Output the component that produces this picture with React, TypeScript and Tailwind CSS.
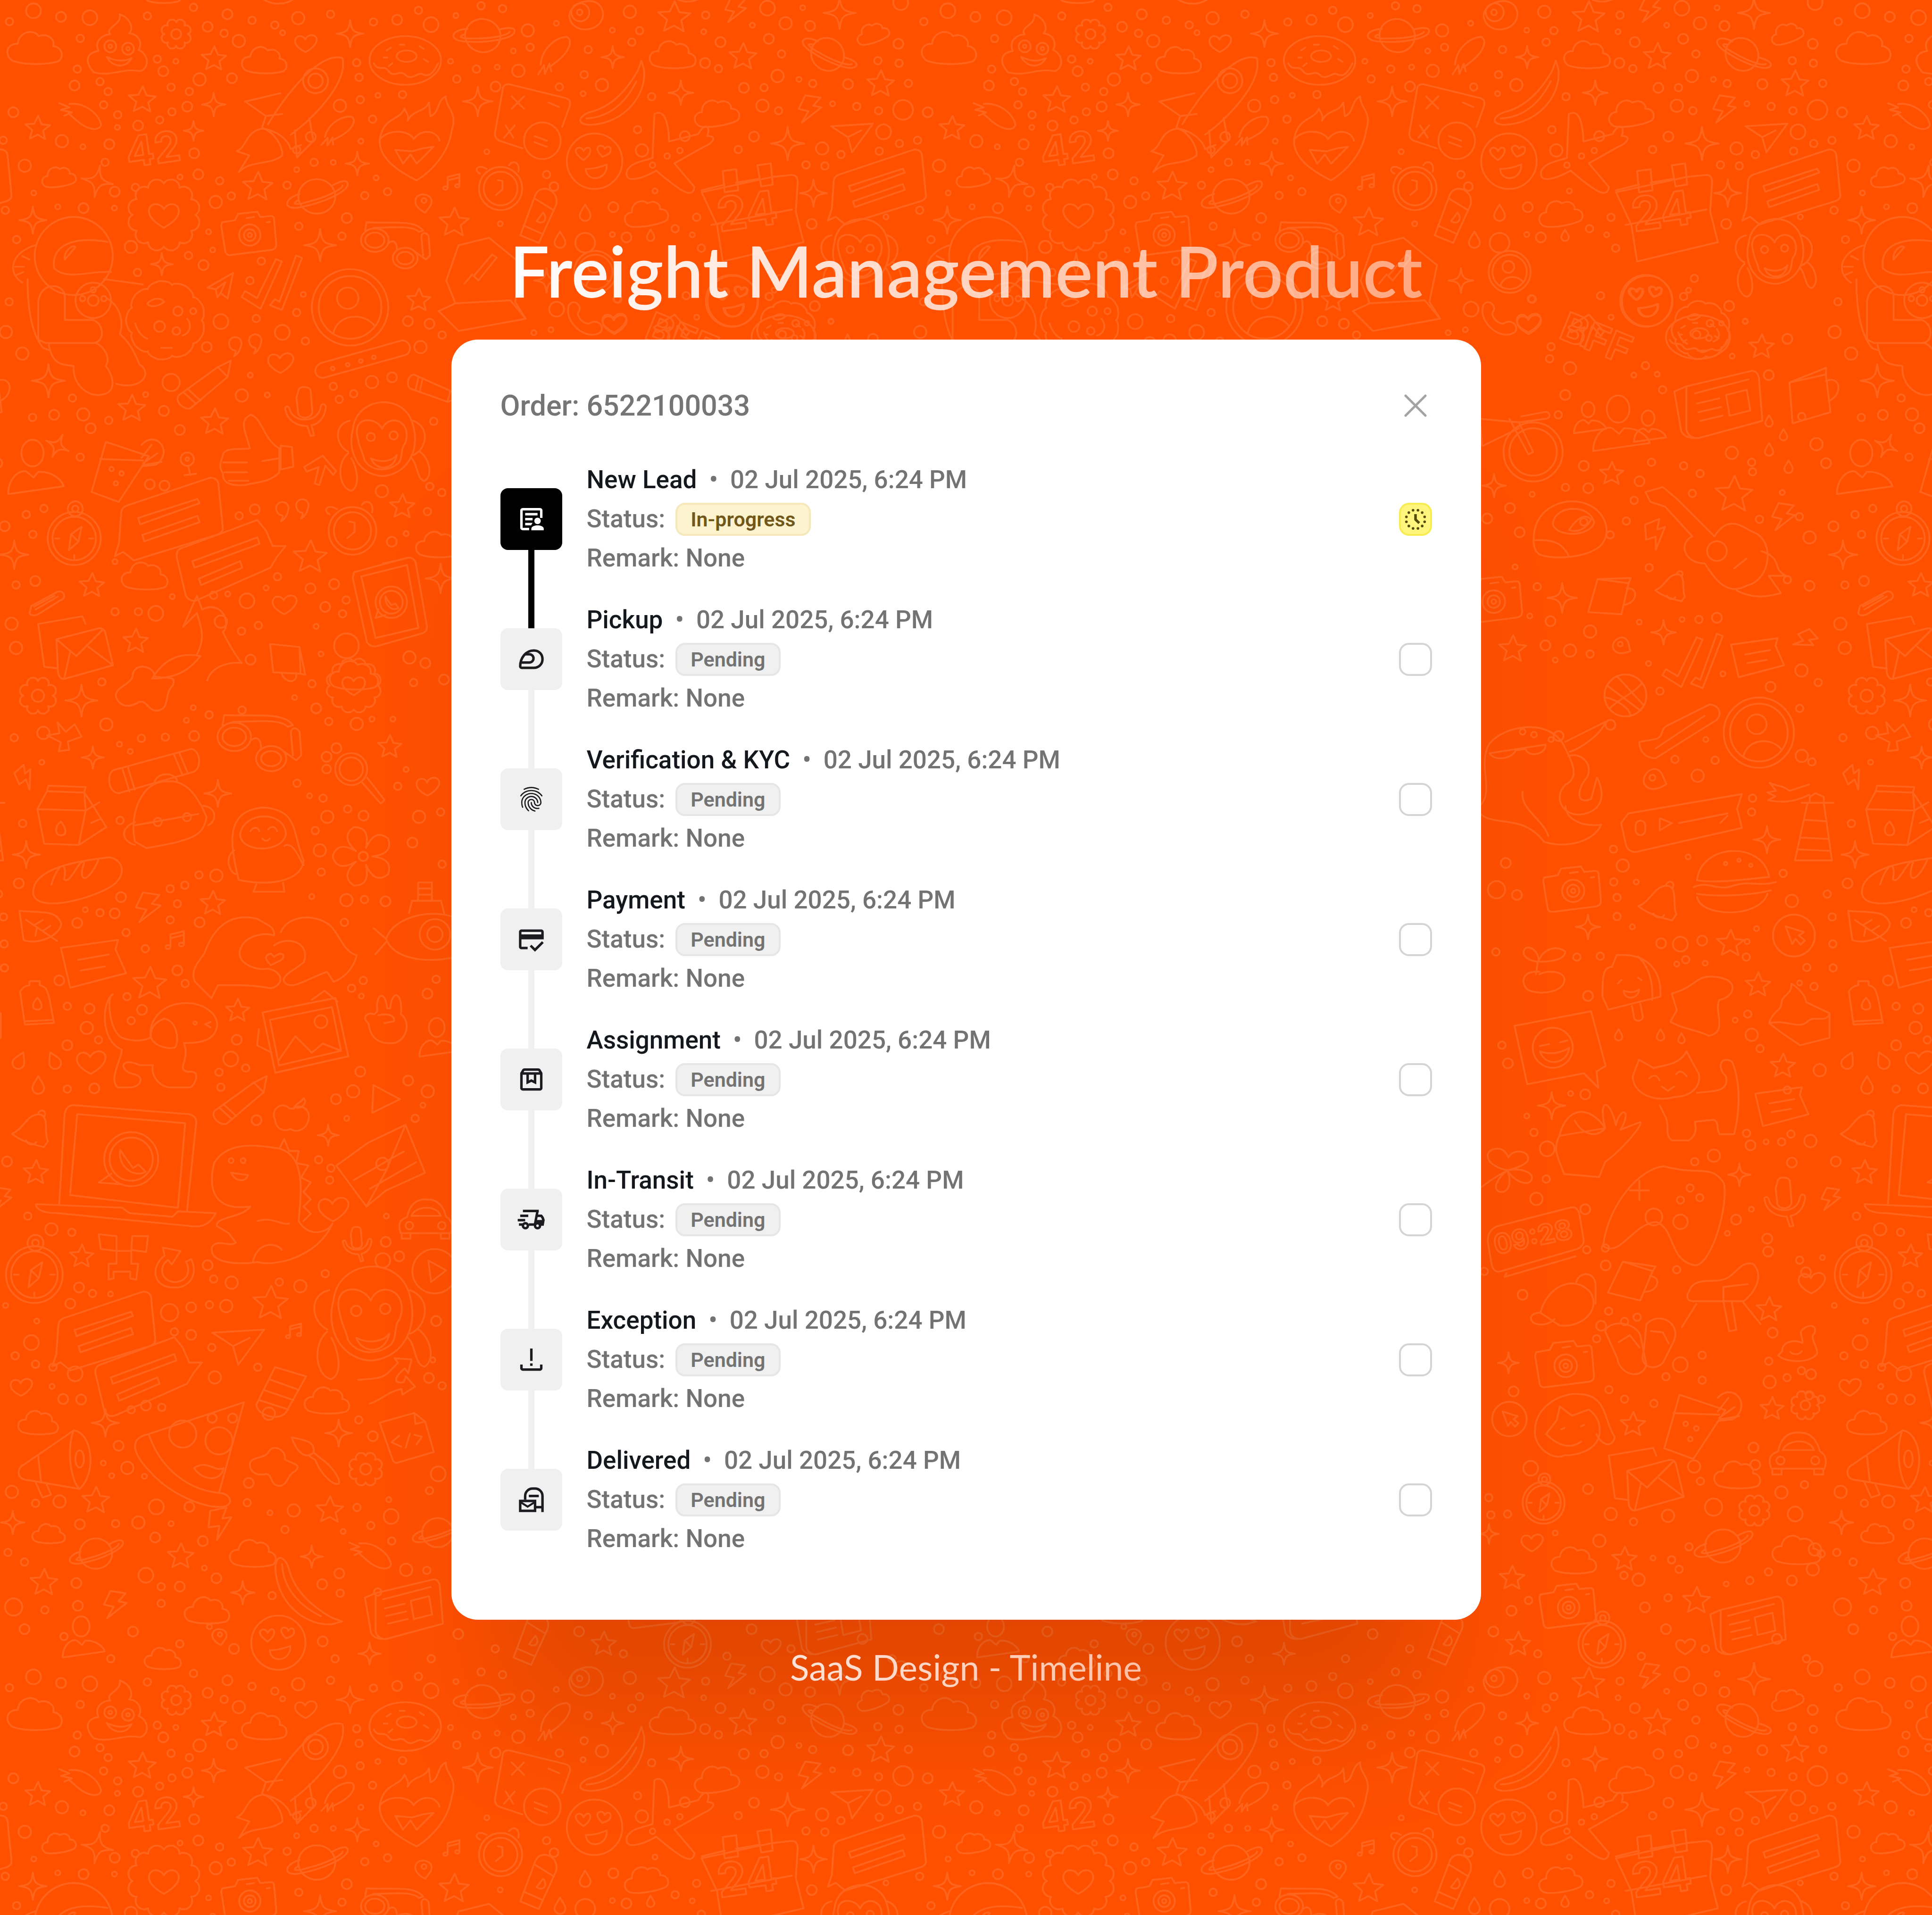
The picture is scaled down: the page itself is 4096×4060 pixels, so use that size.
import type { ReactNode } from "react";
import { MdCreditScore, MdFingerprint } from "react-icons/md";

/* ------------------------------------------------------------------ */
/* Doodle wallpaper                                                    */
/* ------------------------------------------------------------------ */

const scallop = (n: number, inner: number, outer: number) => {
  const pts: string[] = [];
  for (let i = 0; i < n; i++) {
    const a0 = (i / n) * Math.PI * 2;
    const a1 = ((i + 0.5) / n) * Math.PI * 2;
    const a2 = ((i + 1) / n) * Math.PI * 2;
    const p = (a: number, r: number) => `${(Math.cos(a) * r).toFixed(1)} ${(Math.sin(a) * r).toFixed(1)}`;
    if (i === 0) pts.push(`M${p(a0, inner)}`);
    pts.push(`Q${p(a0 + 0.08, outer)} ${p(a1, outer)}Q${p(a2 - 0.08, outer)} ${p(a2, inner)}`);
  }
  return pts.join("") + "Z";
};

const ring = (x: number, y: number, rx: number, ry = rx) =>
  `M${x - rx} ${y}a${rx} ${ry} 0 1 0 ${rx * 2} 0a${rx} ${ry} 0 1 0 ${-rx * 2} 0Z`;

/* Every motif is drawn about the origin in a box 100 units wide. */
const MOTIFS: Record<string, string> = {
  cloud: "M-40 22C-56 10-48-10-30-8C-28-30-2-36 8-22C24-28 38-16 34-4C52-2 54 18 42 24C20 30-20 30-40 22Z",
  star: "M2-50L16-16 50-12 22 10 30 44 0 26-32 42-22 8-50-16-14-18Z",
  sparkle: "M0-50C4-12 12-4 50 0C12 4 4 12 0 50C-4 12-12 4-50 0C-12-4-4-12 0-50Z",
  heart: "M-2 40C-30 26-54 6-48-16C-42-38-12-36-4-16C6-40 40-44 48-20C52 2 22 28-2 40Z",
  drop: "M0-50C20-15 34 0 34 18A34 34 0 0 1-34 18C-34 0-20-15 0-50Z",
  bolt: "M-18-50L38-42 12-12 42-6-30 50-6 8-42 0Z",
  gear: scallop(8, 38, 50) + ring(0, 0, 16),
  badge: scallop(12, 44, 51) + "M0 18C-14 10-24 0-20-10C-16-18-4-16 0-8C4-16 16-18 20-10C24 0 14 10 0 18Z",
  flower: scallop(5, 16, 54) + ring(0, 0, 8),
  planet: ring(0, 0, 30, 28) + "M-28-4C-56 4-56 26-20 16C10 10 46-6 50-18C52-28 40-26 26-18M-30 6C-44 14-30 14-12 8C14 2 42-12 42-18",
  donut: ring(0, 0, 50, 34) + ring(2, -6, 14, 8) + "M-44 4C-38 16-30 6-24 14C-16 26-8 12 0 20C10 30 18 14 26 20C36 24 42 12 46 4M-26-14l6-4M-8-22h7M20-20l6 4M26-2l6 4M-18 4l-5 4M-30-4h5",
  mitten: "M-50-32L-26-22-46-16-20-10-38-2M-26-30C10-34 44-8 50 20C44 36 18 32-8 10L-28-8",
  poop: "M-40 42C-58 22-50 8-32 6C-40-12-24-22-12-22C-22-34 8-38 4-56C22-50 28-32 20-24C38-22 42-6 36 4C54 12 54 36 38 40C10 34-10 50-40 42Z" + ring(-12, -2, 10) + ring(18, 2, 10) + ring(-12, -2, 3) + ring(18, 2, 3) + "M-18 16C0 24 10 24 24 18C14 36-8 34-18 16Z",
  rocket: "M-22 20C0-16 30-50 50-44C56-20 20 16 0 30M24-22m-12 0a12 12 0 1 0 24 0a12 12 0 1 0-24 0M24-22m-7 0a7 7 0 1 0 14 0a7 7 0 1 0-14 0M-10-10L-44-2-24 12-8 10M4 26L6 52 22 36 18 14M-24 12L-28 24C-12 26-2 36 0 44L10 40M-26 24C-44 26-42 42-52 46L-40 50-50 66C-38 54-20 60-8 50C-8 40-16 28-26 24Z",
  flame: "M4 44C-20 32-48 14-44-12C-38-40-18-34-12-50C-8-42-6-40-8-34C0-50 14-44 20-58L22-40C34-44 30-60 42-66C42-50 58-46 50-22C46 8 24 32 4 44ZM-44-10C-32-24-6-22 0-10C10-24 30-22 34-8M-24 4L-14 22-4 10 4 22 26 0 12 2-2 6Z",
  music: "M-30 30V-28L34-44V16M-30-10L34-26" + ring(-42, 32, 12, 9) + ring(22, 20, 12, 9),
  camera: "M-50-22L-26-26-20-38 16-42 22-32 42-34Q48-34 48-26L52 20Q52 28 44 30L-36 40Q-42 40-44 34L-52-16Z" + ring(2, 2, 20) + ring(2, 2, 11) + ring(2, 2, 4) + "M34-22l6-1M-4-30l14-2",
  glasses: ring(-28, 4, 20, 17) + ring(-28, 4, 14, 11) + ring(16, 30, 18, 15) + ring(16, 30, 12, 9) + "M-8 8C0 2 4 8 4 18M-42-10L-40-22C0-20 30-26 42-10L36-8C26-18 0-14-30-14M32 22L46 32 52 26 50-2C44-10 38-6 40 4L42 26",
  pin: "M10 50C-30 30-52 0-34-28C-16-52 34-46 42-14C46 10 30 20 10 50Z" + ring(4, -12, 12),
  astronaut: ring(-8, -52, 44) + "M-30-38C-34-66-6-74 30-68M-30-38C-14-24 10-36 34-34M-18-48C-20-56-10-66-6-62ZM-52-64C-78-56-84-34-66-22M-60-26C-60 4-56 36-42 52L-36 54M-66-52l8 4M-74-40h10M-74-30l9-4M-48 42V0C-46-24-18-22-18-6V20H14C28 26 26 46 14 46H-40ZM-36 48C-32 74-16 70-8 72C-10 94 10 108 24 104C40 102 38 84 28 72C36 60 20 44 14 46M26-26L70-20M30-4C46 6 48 24 44 36C56 46 62 60 66 70C82 80 68 100 40 92" + ring(14, -2, 20) + ring(14, -2, 6) + ring(2, -4, 3) + ring(26, -4, 3) + ring(14, -14, 3),
  plane: "M-50-18L50-24 0 44-10 8ZM-10 8L22-8",
  send: "M-50 10L44-44 24 50-2 30-14 46-20 16ZM-20 16L16-10-2 30",
  ticks: "M-50 24L-44 14-24 26 8-40 18-36-18 44ZM-2 38L6 28 14 32 42-46 52-42 18 46Z",
  profile: ring(0, 0, 50) + ring(0, 0, 41) + ring(-3, -12, 14) + "M-22 34C-16 8 18 6 32 24",
  cookie: scallop(9, 47, 52) + "M-24-22C-14-32-4-28-2-24C-10-18-20-16-24-22ZM-40 4C-36 16-30 22-24 24M28-2C36 8 30 18 22 20M-6 36H8" + ring(16, -12, 6) + ring(-8, 8, 7) + ring(14, 14, 5) + ring(36, -12, 4),
  quote: "M-48-6a18 18 0 1 1 34 4C-18 18-30 26-34 28C-30 20-28 14-30 12C-40 10-46 4-48-6ZM10-14a18 18 0 1 1 34 4C40 10 28 18 24 20C28 12 30 6 28 4C18 2 12-4 10-14Z",
  pencil: "M-46 18L26-34 50-46 44-16-22 40C-32 50-56 30-46 18ZM-38 12L-14 34M-30 6L-6 28M26-34L44-16",
  bar: "M-44 4L42-20C52-20 54-6 44-4L-42 20C-52 20-54 8-44 4Z" + ring(-32, 10, 2) + ring(-16, 6, 2) + ring(-2, 2, 2) + ring(12, -2, 2),
  thumb: "M-48-2C-44-12-22-8-10-10C-14-30-28-50-8-58C8-52 10-22 32-10V24C20 38 0 38-16 42C-34 44-50 40-48 26C-56 14-50 8-48-2ZM-48 10H-14M-46 24H-14M-40 36H-12M34-14L50-12 52 16 34 20ZM8 8L32 4",
  mic: "M-14-50C-8-58 12-56 14-46L18 4C16 22-12 22-16 8L-20-30ZM-46 0C-50-10-38-12-36-2C-30 30 32 34 38-8C40-18 52-16 50-4C46 20 32 34 16 36L22 60 14 62 6 38C-20 38-42 24-46 0Z",
  monkey: "M-34-14C-30-54 30-60 40-18C48 12 34 40 4 44C-26 44-42 14-34-14ZM-28-2C-36-30-6-30 2-14C10-34 40-24 30 4C24 10 28 20 22 28C8 40-12 38-20 24C-22 14-26 10-28-2ZM-12 22C0 28 14 26 20 18C16 38-6 38-12 22ZM-38-24C-58-20-56 6-40 14M40-24C62-16 56 12 40 18M-40 16C-56 30-50 60-36 62C-24 56-30 32-36 22M38 22C46 30 44 48 54 50C66 42 58 20 48 14" + ring(-12, -4, 5) + ring(16, -6, 5),
  user: ring(-6, -30, 20, 24) + "M-50 44C-50 10-22-4-14 6L-4 14 4 4C30 2 48 20 50 30Z",
  drink: "M-30-34L30-14-12 50-50 36ZM-38-10L22-8M20-30C40-52 66-20 40-2L22 0M22-4L42-18M20-12L34-30M24-2L48-6" + ring(-22, 4, 3) + ring(-8, 10, 3) + ring(-16, 24, 3),
  webcam: ring(0, -22, 30) + ring(0, -22, 8) + "M4 8L14 50M-12 50L40 44",
  arrow: "M-50-8L6-42 46 4 38 16 14-12-4 46-18 42-6-8-42 6Z",
  clock: ring(0, 4, 46) + ring(0, 4, 36) + "M-6-14L4-12 4 6-10 18M-44-28C-58-34-50-50-30-38M18-46C26-58 42-52 38-32",
  compass: ring(0, 6, 50) + ring(0, 6, 41) + ring(2, -50, 14) + ring(2, -50, 6) + "M14-16L8 12-10 28-6-2ZM-6-2L8 12M-36 6h8M28 6h8M0 44v-7",
  chat: "M-40-12L38-38Q46-38 46-30L50 10Q50 14 44 16L-34 40-44 32-52 36-48 24-46-4Q-46-10-40-12ZM-30 0L26-18 28-14-28 6ZM-26 16L26-2 28 4-24 22Z",
  chatflip: "M-44-8L26-34 34-24 40-10 52-10 44 0 38 10-30 40Q-36 42-40 36L-48 2Q-50-6-44-8ZM-34 4L26-18 28-12-32 10ZM-28 20L10 4 12 10-26 26Z",
  card: "M-48-22L38-34 34-20 50 16-34 38ZM-22-4L24-12M-18 12L18 6",
  clip: "M-46 30L-42 14 32-26C52-30 56-6 40-2L-24 38C-40 44-50 38-46 30ZM-30 24L32-12M-34 16L22-14",
  tablet: "M-48-42L26-62Q34-64 38-56L54 34Q54 42 46 44L-18 62Q-26 62-30 56L-50-34ZM-38-36L26-52 42 36-18 50ZM-8-54L10-58" + ring(4, 0, 22) + ring(4, 0, 16) + "M-4-8C-6 4 6 14 14 8L10 2 4 4-2-4ZM-14 10L-18 22-4 18",
  envelope: "M-48-28L10-38 14-28M-48-28L-40 28-24 30M-24-8L30-22Q38-24 40-16L50 26-14 44Q-20 44-22 36ZM-24-8L2 14 36-20M-14 44L-6 8M50 26L18 2",
  bird: "M-46 46C-30 20-10 16 10 20C2 30-12 46-46 46M6 18C18-4 8-20 6-30L-10-14 6-50 12-34C36-46 46-16 36-8C40 0 48 16 58 28C40 26 22 34 18 48",
  cup: "M-44 36L-26-28 34-20 20 40ZM-26-28L38-30 34-20M30-10C56-12 50 20 24 22",
  tube: "M10-50C24-48 34-36 30-20L-2 50-36 36-10-34C-6-46 0-50 10-50ZM-10-32L26-10M-30 18L6 34M6-6C16 6 6 18-6 10Z" + ring(26, -54, 8),
  milk: "M-50-12L-36-38 18-36 30-18 50 14 10 40-40 38ZM-50-12L20-10 10 40M18-36L20-10 40-22M-36-38L-34-46 20-44 18-36M-16 6C-6 18-8 26-16 26C-24 26-26 14-16 6ZM28 8L42 2",
  bread: "M-48 16C-50-12 0-20 36-24C54-20 54 0 34 10C8 24-44 36-48 16ZM-28 6C-20-20-10-20-14 0C-8 8 4-26 8-18C0 4 12 6 24-22",
  leaf: "M-50-42C0-36 40-46 50-10C44 20-8 40-40 28ZM-34-20L40 30M-14-8L6-20M-8-2L-12 18M6 6L24-6",
  bottle: "M-40-30C-30-44-24-44-16-46V-56H10V-46C30-40 28-30 34-14L46 50-28 54ZM-28 46L44 42M4-14C16 0 20 16 4 16C-12 16-10 0 4-14Z",
  hands: "M-48 16C-52 8-42 0-42-2C-36-18-26-26-10-22C-4-18 0-18 0-12C-6-14-14-12-18-8C-28 4-10 10-4 8C6 10 6 18-2 20C-12 18-20 18-34 18L-38 26ZM4-14C8-24 24-26 34-18C40-12 42-2 50 0C48 8 42 14 36 16L32 10C20 14 10 22 6 16C4 12 14 8 18 4C22-8 8-12 0-6M-2 6C-6 2-6 0-2-1L0 1C4-3 8 0 4 3Z",
  penguin: "M-38 44C-48 0-60-50-4-54C44-50 34-20 50 18C46 48 0 52-38 44ZM-36-18C-30-50 24-50 26-18C22 8-36 8-36-18ZM-22-22C-18-28-12-28-10-22M2-24C6-30 12-28 14-22M-6-12Q0-6 4-12M-44 4C-58 14-50 34-42 36M24-2C36-10 46 20 50 24M-14 50L-18 60H24L22 48",
  search: "M-4-20m-26 0a26 26 0 1 0 52 0a26 26 0 1 0-52 0M-4-20m-19 0a19 19 0 1 0 38 0a19 19 0 1 0-38 0M14 2L44 36 50 30 22-6" + ring(-44, -40, 8) + ring(-44, -20, 7) + ring(-28, -54, 8),
  sub: "M-40 10C-30-20 20-30 50-18V34C10 42-30 36-40 10ZM-40 10L-56-4M-40 14L-54 30M-10-24L-6-40H32L36-24M2-40V-64H20V-40M2-56H20M2-48H20" + ring(24, 4, 20) + ring(24, 4, 10),
  dog: "M-44-46C-50-46-48-10-34-6C-20-2-10-6-10-8C-12-22 0-38 22-38C36-38 50-30 50-18C48-2 30-2 20-2C26 14 12 22 24 24C36 22 30 36 26 38H6C-4 36-10 26-8 18H-20C-36 10-40 22-26 26C-14 28-20 38-28 38H-40C-48 30-36 12-36 4C-56-4-54-40-44-46ZM-10-8C-8 0 4 4 12 2C16-4 14-22 2-24C-8-20-10-14-10-8M44-16l-5-3 5-2" + ring(30, -20, 1.5),
  picture: "M-44-26L36-42 50 22-30 40ZM-36-18L32-32 42 16-26 32ZM-26 26L-8 0 10 18 22 8 42 16M-48-8L-50 10-34 18M10-40L24-50 38-38" + ring(20, -16, 7),
  peace: "M-40 10C-54 0-44-14-28-8L-22-14C-26-50-6-60-2-20L4-20C8-60 30-54 26-8C44 4 42 40 14 50C-20 54-36 40-40 10ZM-20-6C-6-10 14-8 12 6L-8 10",
  bell: "M-50 8C-20-4-14-40 16-38C40-36 26 10 36 26L26 40C-6 32-30 24-50 8ZM-16 24C-12 36 4 36 8 28M12-38C14-52 34-50 28-34",
  laptop: "M-37 20L-34-30Q-33-35-29-35L35-30Q40-29 39-24L34 24M-31 15L-27-30 33-25 29 22ZM-50 20L-2 22 2 25 26 27 29 24 50 25C46 33 40 33 34 32L-38 25C-46 25-50 23-50 20Z" + ring(3, -5, 15) + ring(3, -5, 12) + "M-8 3L-15 8-2 9M-3-10C-5-2 4 6 11 2L7-2 4 0-1-7Z",
  dino: "M-46-34C-34-54-6-48 8-46C30-40 26-10 24 14C32 28 48 24 52 16C40 44 4 52-10 48C-24 50-50 50-48 36C-44 28-34 36-28 32L-34 24-44 18C-44 10-24 12-16 2C-44 6-52-10-46-34ZM-32-26C-28-18-20-18-18-24ZM-10 14C2 10 10 18 16 16M8-46L12-54 16-44 24-44 22-34 32-32 26-22 34-18 28-10 34-4 28 2 34 8 28 14M-14 48C-10 30 6 32 10 38" + ring(-32, -36, 2) + ring(-22, -36, 2),
  apple: "M-6-18C-30-40-54-12-42 10C-38 40-12 36-4 32C12 42 34 34 40 10C48-22 12-30 4-18ZM4-20C12-34 20-30 28-44C38-34 26-20 12-20",
  tri: "M-38-46L48 0-42 44Z",
  map: "M-50 4L-14-22 28-42 50 12 6 32-16 50ZM-16 50L6 10 28-42M-12 30L40 0M-30 20L26-12" + ring(2, 2, 7),
  car: "M-46 26C-54 0-40 0-34-4C-28-34-10-38 6-36C24-36 34-20 38-4C50 2 50 16 46 26ZM-26-6C-20-24 20-28 28-6Z" + ring(-30, 12, 7) + ring(30, 12, 7) + "M-44 26V36H-28V26M28 26V36H44V26",
  pixel: "M-50-46L-14-42V-12L-46-16ZM18-42L50-42 46-10 16-14ZM-14-12H16V14H30L26 46 14 44V30H-20V44L-30 46V14H-14Z",
  refresh: "M-26-44L14-36-6-6-14-16C-34-4-34 30 0 34C34 32 36 4 26-12L38-18C56 20 30 48 0 46C-48 48-56 0-22-26Z",
  play: ring(0, 0, 50) + "M-14-24L26-2-8 24Z",
  sock: "M-10-50L50-32 12 36C0 56-46 44-46 22ZM-20-26L36-6M-32-6L26 14M-40 14L16 32" + ring(-22, 40, 12),
  branch: "M-50-2C-20-4-6-4 6-18L20-32 14-40 44-38 38-14 32-22C12-6 12 6 30 2L34-8 50 10 28 24 26 14C0 20-10 34-30 40",
  megaphone: "M-44 8L26-40C52-36 58 20 34 42L-36 30C-56 30-54 12-44 8ZM26-40C16-20 20 30 34 42M-24-4L-20 32M-28 32L-18 54-6 50-12 36" + ring(34, 0, 6, 12),
  pizza: "M-38-14L46-42 24 38C-10 34-30 10-38-14ZM-38-14C-58-10-50 6-36 20C-20 38 10 52 28 50C38 48 34 38 24 38M-8-14m-12 0a12 12 0 1 0 24 0a12 12 0 1 0-24 0M24-8m-12 0a12 12 0 1 0 24 0a12 12 0 1 0-24 0M2 16C14 8 20 20 28 16C26 28 10 28 2 16Z" + ring(18, -28, 4) + ring(36, -28, 4),
  bone: "M-46 0C-50-20-20-14-10-26C0-50 30-30 24-14C40-4 60-4 46 10C30 16 30 40 14 40C-6 40 0 16-14 16C-30 20-44 14-46 0Z",
  brush: "M-50-50C-20-44 0-40-6-18C-24-4-40-22-50-50ZM-6-20L8-8C30 6 50 34 46 44C34 50 8 22-2-4L-14-12",
  code: "M-50-28L14-46 34-30 50 26-18 46Q-24 46-26 40ZM14-46L16-26 34-30M-14-4L-28 8-10 16M14-6L28-2 18 12M6-8L-2 18",
  banana: "M46-50L50-36C54 0 24 46-32 50C-58 50-52 36-34 30C0 22 24-6 40-34ZM-40 40C0 38 24 10 38-18",
  paper: "M-36-26L40-44Q46-44 48-36L52 14-22 34Q-34 34-36 24ZM-36-26L-50-20-42 26Q-38 34-26 34M-26-18L36-34M-24-6L2-12M-22 4L4-2M-20 14L6 8M10-16L34-22 38 2 14 8Z",
  calc: "M-32-48L42-30Q50-28 48-20L38 8M-32-48Q-40-48-40-40L-50 16Q-50 24-44 26L-14 36M-28-32L-12-16M-12-32L-28-16M-36 6L-26 22M-24 6L-38 22M20-24L34-18" + ring(12, 26, 24) + "M2 20L18 26M2 28L18 34",
  face: ring(0, 0, 50) + "M-20-2C-34-12-38-20-30-24C-24-26-20-20-20-18C-14-28-6-26-8-16C-10-10-14-6-20-2ZM14-8C4-18 2-26 10-28C16-28 18-24 18-22C24-30 32-26 28-16C26-12 20-10 14-8ZM-16 14C0 14 12 10 22 6C24 34-14 40-16 14Z",
  airplane: "M-18-50C-4-58-2-30-2-20L30-28C38-42 44-36 40-26C52-26 46-18 36-14L4 4 26 30C24 44 10 34-16 12C-30 20-52 28-48 12C-42 2-30 2-20-2Z" + ring(-20, 6, 3) + ring(-4, -4, 3) + ring(10, -10, 3),
  calendar: "M-50-22L-26-28M-14-30L10-34M24-36L44-38Q50-38 50-30L48 0 56 32-28 52-34 14-50-20ZM-40 14L44-2M-28-42L-14-44-12-22-26-20ZM8-48L22-50 24-28 12-26Z",
  eye: "M-48 4C-50-40 44-66 50-4C50 50-40 60-48 4Z" + ring(-16, -8, 26) + ring(-18, -8, 8),
  sticker: "M-34-46L6-56 50-20 40 28 54 50-34 66-60 40-38 30-50 0ZM-40 30L34 26 54 50M-14-6L10-34 16-30-8 0ZM-26 4L-16-8",
  phone: "M-44-38C-30-60-6-34-18-20C-26-8 0 18 14 10C30-2 54 16 42 34C4 62-60 6-44-38Z",
  wheel: ring(0, 0, 50) + ring(0, 0, 40) + "M-90-56L-24-50 0 0-8 4-40-56M-24-50L20-56C30-56 30-66 22-68L-20-60M-90-56L-86-10-24-40",
  hat: "M-50 12C-50-30-14-44 10-40C44-36 60 0 40 20C20 36-20 38-40 32C-50 28-50 16-50 12ZM-50 12C-20 10-10 18-2 34M-24-10C-22-36 26-38 32-12C26 8-20 8-24-10ZM-2-2C10-20 20-24 28-16C20-2 8 2-2-2Z",
  guitar: "M-56-46L-42-50-30-40 0-10C10-26 20-20 30-14C50-8 46 26 26 30C8 40-2 20-8 12C-24 12-30-4-18-10L-40-34-52-38ZM38 2C56 8 46 16 58 22L44 22 54 36C40 40 30 40 18 34" + ring(2, 2, 8) + "M16 16L26 8",
  ball: ring(0, 0, 50) + "M-44-24L36 36M-20-46L44 24M-38 32C-20 10 20-4 40-30M-50 4C-20 10 10 30 12 48",
  whale: "M-60 40C-40 20-60-10-50-40C-40-70 40-90 60-40C70-20 80 0 60 10C40 30 60 60 90 50C120 40 110 10 104 0L96 30C70 40 80 10 90 0C100-20 80-36 64-30M60-50L116-78C110-60 80-40 66-36M-46-34L32-46C34-34 10-26 4-40L-10-38C-14-26-40-22-46-34ZM-60 50C-40 70 0 50 30 90C60 100 100 90 110 66C80 70 60 56 60 40M0 20C-4 44 30 60 36 82" + ring(0, -64, 4) + ring(16, -60, 4),
  brushteeth: "M-50 20L-28 16C-20 12-24 4-16 0L36-26C50-26 54-10 40-4L-30 40C-44 40-50 30-50 20ZM-30 28L30-12",
  hand: "M-50-30C-30-20-20-26 0-10L50-26M-50-30L-34-10-56-6-36 4-54 14C-20 20 10 20 50 0",
  lighthouse: "M-20-60H24L46 96H-54ZM-36-60H50M-14-60V-76L2-86 24-76V-60M-30-14L32-10M-38 34L38 38M-46 66L40 70",
  player: "M-44-6L50-22 46-10 50 6-38 26Q-44 26-46 20L-50 2ZM-38 4a4 4 0 1 1 8 0v4a4 4 0 1 1-8 0ZM-18-2L-8 2-18 8ZM-2 2L38-6M32 2L38-4",
  burger: "M-44-4C-40-48 34-52 42-8C20-6-20 0-44-4ZM-48 4C-30-4-20 10 0 2C20-4 30 4 50-2M-44 12C-20 16 20 14 44 8M-44 16C-40 40 30 42 40 12" + ring(-10, -24, 2) + ring(6, -28, 2) + ring(20, -22, 2),
  cursor: ring(0, 0, 50) + "M-20-22L24-8 12 0 26 12 16 22 4 8-4 20Z",
  cherry: "M-10 0C-54-4-56 30-36 44C-10 56 50 50 50 18C48-2 10-4-10 6M-18 6L-14-24C-60-30-50-60-36-58C-20-56-12-40-12-26C0-56 30-64 52-48C50-28 20-24-10-24",
  popsicle: "M-50 20C-50-10-50-30-34-30L-26-50C30-54 50-20 48 20L-40 42ZM10-48C30-30 36 0 34 26M0 36L4 58C10 64 20 60 18 52L14 32M-24-2l6-6M10-12l6 4M-14 10C-4 14 4 14 12 8C10 26-14 26-14 10Z",
  blob: "M-48-20C-10-30-10-50 20-46C60-42 50-14 26-10C18 10 40 40 10 46C-10 36-30 36-50 24L-40 6Z",
  cake: "M-50 16C-44-4-30-4-30-16C-30-30-12-30-14-48C0-40 10-26 10-18L48 0V40L0 52C-14 42-34 30-50 16ZM-50 16C-20 10 0 28 14 12C24 4 40 16 48 2",
  laugh: "M-50-24L34-40 50 20 40 26 42 44 26 28-36 40Z" + ring(-8, 0, 22) + "M-22-2L-12-4M0-6L8-8M-22 4C-10 8 0 6 10 0C8 18-16 22-22 4Z",
  cat: "M-50-20L-44-36-30-28C-10-32-4-34 2-44L14-22C16-8 4 0-10 0C-30 6-50-4-50-20ZM12-4C26-6 44-4 40-20C30-30 36-40 46-34C56-10 52 20 48 36H34C30 30 34 24 28 22L10 24C12 34 10 38 4 42H-12C-20 36-14 30-18 20L-24 8M-34-18Q-28-24-24-16M-8-22Q-4-28 2-20M-22-10L-16-6-10-10",
  ok: "M-50 0C-40-40-10-40 10-10C-2 4-20-2-30-20M10-10C0-50 16-50 24-14C30-40 46-34 30-8L56-18C60-14 30 20 10 34L2 54-44 50C-50 30-60 20-50 0Z",
  clover: "M0 0C-50-10-50-44-20-44C-6-44 0-30 2-26C10-46 50-40 40-18C30-8 14-4 0 0C30-6 56 6 48 20C40 34 10 20 0 0C10 30 0 44-14 44C-34 40-20 14 0 0C-20 10-40 24-56 36",
  gamepad: "M-50 34C-46 0-20-30 0-32C30-24 40-34 50-18C54 0 40 50 26 50C4 46 10 20-6 14C-26 16-36 44-50 34ZM-20-20V-4M-28-12H-12" + ring(22, -14, 3) + ring(30, -6, 3) + ring(14, -4, 3) + ring(-8, 10, 7) + ring(14, 14, 6),
  panel: "M-40-14L38-34Q46-36 48-26L52-2Q54 6 46 10L-36 34Q-44 36-46 26L-50 2Q-50-10-40-14ZM-30 36L-32 40 44 18",
  turtle: "M-40 20C-30-20 10-40 36-14C56 10 30 44-10 40ZM-40 20C-60 20-58 36-44 38C-34 40-24 36-18 30M16-28C20-44 44-46 46-24V6",
  grill: "M-46 0C-40-20-14-12 0-16C20-20 24-44 44-38C60-20 44 4 30 14H-40C-50 14-50 6-46 0ZM-36 18L-56 50M2 14L10 56 20 54 14 16M30 16L54 46M2 14V-6L36-10",
  flipflop: "M-50-30C-40-50 0-40 2-20L10 20C0 44-30 30-32 10ZM-30-14L-14-24 0-6M10-40C30-60 60-40 50-16L34 16C20 30-2 20 6 0ZM16-30L34-28 42-12",
  duck: "M-40 20C-40-4-10-10 10 0C12-20-6-26 20-40C44-50 44-26 36-20C30-10 48 10 46 26C30 50-30 50-50 30ZM-20 22C-12 30 4 28 8 20",
  dogface: "M-50 10C-56-30-14-50 10-46C44-44 40-10 54 10C50 26 36 20 30 6M-50 10C-44 30-24 40-12 34C0 34 30 30 34 6C36-10 28-20 20-26L-2-18-18-30-22-12-36 6C-20 22-4 26 10 16M-16 0l4-2M10-4l4-2",
  backpack: "M-44 26C-52-10-34-50-4-48C20-50 34-28 44-4C40 18 30 24-30 34ZM-44 6L34-8M-20-46C-18-60 6-60 8-48M-44 2C-64 10-60 26-44 30M38-18C56-18 58 0 46 6" + ring(-16, 2, 5) + ring(20, -4, 5),
  scroll: "M-46-6L42-30C52-28 54-8 44-4L-40 20C-52 20-54-2-46-6ZM-36-8L-28 18M-30-10L-22 16M22-24L32 0M28-26L38-2",
  shard: "M-50-12L-14-18-20-50 4-22 30-44 50-8 10 6 14 30-16 34-10 8Z",
};

interface Section {
  origin: [number, number];
  scale: [number, number];
  dots: string;
  doodles: string;
}

/* The tile is split in sections, each with a grid of its own. Dots are
   "x,y,radius"; doodles are "motif,x,y,width[,rotation]". */
const SECTIONS: Section[] = [
  {
    origin: [0, 0],
    scale: [0.2433, 0.3503],
    dots: "112,25,6 204,39,4 300,41,6 32,50,3 492,37,3 268,89,3 646,17,3 759,33,4 693,62,4 748,77,3 797,95,5 841,47,3 917,58,3 943,76,2 995,42,5 1103,33,3 1246,51,3 1325,46,4 1396,24,3 1438,57,6 1521,36,2 258,160,3 334,189,3 249,198,4 361,212,3 346,243,3 393,266,3 392,295,2 461,291,4 525,137,3 587,142,2 545,165,4 571,202,3 632,212,3 666,184,5 625,247,4 574,259,3 533,278,3 774,181,4 45,260,4 11,325,3 207,327,5 277,340,2 365,334,4 351,376,3 83,384,5 648,355,4 662,404,4 601,410,2 113,447,2 452,434,3 383,444,4 193,479,2 279,482,4 382,482,2 18,487,3 56,555,3 720,468,5 733,419,3 772,454,3 958,429,3 1190,145,3 1198,179,3 1202,231,3 1134,245,5 1037,317,4 990,347,3 1048,376,3 1112,376,2 990,393,2 1204,327,2 1243,276,3 1261,221,2 1343,219,3 1524,183,3 1503,142,2 1217,453,3 1293,444,3 1255,412,2 1157,505,4 997,524,3 1141,547,3 437,572,5 629,592,3 459,631,3 679,614,4 696,537,2 710,579,2 872,605,3 834,650,3 1012,682,2 990,724,3 31,699,3 20,769,5 75,819,5 737,745,6 855,738,3 942,770,6 690,804,4 1019,790,3 835,869,2 807,916,5 892,915,2 571,886,7 486,914,2 547,952,4 242,922,3 109,967,3 181,961,4 278,960,5 363,974,3 303,992,4 268,1059,3 600,996,4 1112,895,3 1132,925,3 1180,912,3 1241,885,5 1308,874,4 1403,804,5 1361,744,4 1433,750,4 1475,776,3 1447,976,3 1434,1127,3 1474,1141,3 1274,1138,5 1426,1185,3 1307,1255,4 1355,1236,2 500,1122,4 549,1125,4 88,1192,3 147,1178,3 110,1238,3 16,1219,4 384,1301,2 54,1355,3 118,1346,4 384,1417,3 462,1417,3 520,1421,6 575,1382,2 713,1379,3 760,1376,2 824,1392,6 888,1362,2 926,1336,3 737,1440,5 862,1449,3 806,1462,3 1036,1363,4 1115,1353,4 1155,1390,3 1085,1406,4 1143,1422,3 1055,1451,2 39,1445,5 54,1501,5 1156,1496,10 1071,1515,2 836,1528,4 1366,1523,5 1419,1536,4 798,1195,3 850,1180,4",
    doodles:
      "cloud,115,112,45 poop,392,110,48 gear,588,79,25 star,714,136,20 cloud,881,140,37 heart,1021,100,18 sparkle,1168,78,22 donut,1352,140,58 star,475,231,22 star,126,297,20 mitten,268,270,34 sparkle,713,242,19 sparkle,646,303,16 rocket,970,240,84 mitten,1130,305,30,-70 cloud,195,410,28,-10 sparkle,325,420,26,10 badge,547,498,58 star,860,432,24 planet,1057,455,50 sparkle,1192,379,19 flame,1380,340,62 music,1512,422,15 camera,830,542,43 sparkle,1068,568,26 glasses,1315,550,56 pin,1412,470,16 star,1515,515,24 sparkle,110,510,22 astronaut,270,700,72 sparkle,540,612,18 send,738,660,22 ticks,905,655,48 profile,1168,712,62 star,1397,695,19 cookie,553,742,62 quote,820,803,28 heart,937,840,21 pencil,680,893,44 bar,1210,832,76 sparkle,162,882,27 star,440,946,22 star,716,977,22 thumb,857,1055,57 mic,1017,950,34 monkey,1270,1020,66 user,120,1088,45 sparkle,192,1033,20,25 drink,425,1080,58 webcam,625,1075,18 arrow,1070,1088,27 quote,977,1185,28 clock,1176,1225,42 star,1342,1173,20 cloud,1460,1262,36 compass,248,1240,43 chat,567,1200,86 chatflip,765,1290,88 star,1035,1290,27 cloud,482,1335,38 heart,950,1400,20 sparkle,48,1285,23 star,307,1356,20 clip,155,1392,29 sparkle,1470,1340,24 tablet,1296,1395,58 envelope,250,1495,62 star,453,1485,20 bird,640,1480,70 cup,965,1530,36,80 pencil,1440,900,36,60 cloud,1180,1565,40",
  },
  {
    origin: [0, 549],
    scale: [0.2433, 0.4865],
    dots: "48,102,3 145,94,5 140,143,2 355,80,5 399,113,2 435,125,2 472,103,3 340,9,3 552,101,3 622,73,2 645,52,2 698,64,3 808,56,3 648,99,4 983,35,2 1055,53,4 1041,12,3 1097,75,3 1190,79,5 1241,71,2 1311,71,2 1481,5,4 1380,10,3 1355,155,2 1327,183,3 991,178,3 1078,203,3 1033,199,2 1160,221,3 1213,232,4 1092,234,5 1052,257,3 1067,290,5 1072,326,3 1398,234,5 1470,226,3 1376,277,4 1475,313,3 76,245,3 401,240,3 63,345,4 404,368,4 383,395,4 334,394,3 285,389,2 258,411,4 421,427,3 485,454,3 664,331,3 722,332,5 617,348,3 568,354,3 592,379,3 568,406,3 666,410,4 1040,367,2 1156,373,5 1216,372,3 1286,375,4 1149,410,3 12,401,3 14,446,3 15,486,3 198,507,4 225,550,3 299,554,4 290,586,5 329,606,3 225,615,4 424,534,3 474,556,4 438,574,3 592,490,4 618,512,3 1173,520,3 1206,533,2 1212,507,3 1455,505,3 1426,529,4 225,688,3 315,687,4 790,606,4 770,638,6 820,653,3 731,660,3 737,685,3 856,740,4 1121,705,4 1157,737,2 1178,692,5 1202,659,4 1362,674,4 1427,692,5 1411,715,2 1385,737,3 1063,806,3 1104,820,3 1100,840,3 24,809,4 93,900,3 172,922,5 240,927,3 1287,943,4 1277,974,6 1332,967,4 1289,900,2 693,982,4 713,1005,3 773,1011,5 932,1010,3 1002,1017,5 1085,996,3 19,1049,2 123,1075,2 105,1111,6 51,1133,3 119,1147,3 177,1152,3 251,1163,6 174,1184,2 211,1205,4 271,1206,4 264,1019,4 309,1029,3 369,1030,2 235,1046,4 566,1061,7 638,1052,4 699,1048,3 755,1050,5 582,1093,3 638,1098,4 707,1119,3 717,1169,5 860,1152,3 438,1223,3 487,1216,4 540,1219,3 396,1283,4 345,1312,2 425,1320,5 373,1333,2 482,1334,2 1455,1075,4 1444,1140,2 1431,1170,4 1475,1183,3 1197,1240,3 1244,1267,4 1462,1330,6 1433,1358,3 40,1360,5 119,1379,3 199,1376,5 267,1414,4 386,1413,3 462,1411,5 571,1413,2 522,1385,6 632,1385,4 518,1436,4 677,1442,4 830,1345,4 825,1378,3 901,1395,2 980,1391,5 951,1423,3 1191,1386,3 1297,1373,2 1237,1416,3 1305,1401,6 1145,1426,2 1307,1442,3 27,1461,3 82,1477,3 255,1512,4 487,1499,6 538,1518,3 600,1518,4 722,1504,4 682,1487,2 908,1533,3 1075,1514,4 1132,1496,4 1135,1529,3 1260,1527,3 1355,1490,5 1424,1491,3 46,1552,7 150,1557,3 260,1550,4 538,1546,3",
    doodles:
      "gear,127,32,31 sparkle,272,40,26 bone,480,22,50,-20 badge,1180,15,44 glasses,860,95,68 shard,215,105,28 sparkle,310,135,18 scroll,515,165,72 backpack,570,240,66 bolt,85,168,18,-50 milk,240,235,56 sparkle,88,297,22 bread,257,338,74 leaf,135,420,34 card,310,477,54 bottle,120,545,32 bolt,495,385,24 star,710,378,20 music,590,440,17 star,500,512,27 hands,915,465,134 sparkle,727,195,22 penguin,890,285,60 search,1180,175,50 flower,1212,300,46 star,1300,117,19 heart,1428,183,19 sub,1390,425,62 dog,540,615,90 picture,1010,600,74 star,793,557,19 peace,1295,570,40 user,1465,605,32 heart,305,643,24 drop,66,640,14,25 drop,180,640,14,-25 drop,128,681,14 bell,110,757,34 star,120,827,20 laptop,420,820,146 dino,900,880,98 pencil,800,708,44 apple,975,733,33 tri,1285,705,25 sparkle,1095,765,17 map,1270,810,72 heart,1113,888,25 car,1420,905,44 mic,1190,945,24 compass,115,992,46 star,273,967,19 pixel,412,968,40 refresh,582,985,36 chat,350,1090,82 chatflip,490,1162,86 star,903,1045,28 plane,795,1110,42 music,985,1092,14 monkey,1230,1065,84 play,1450,992,36 sock,935,1195,42 branch,1290,1175,46 heart,72,1185,18 cloud,127,1245,33 sparkle,352,1245,22 megaphone,185,1305,58 pizza,640,1290,92 cloud,1090,1208,37 bone,910,1317,40 brush,1055,1310,40 sparkle,1130,1262,22 gear,1220,1322,28 code,1357,1270,44 star,320,1374,22 star,1100,1390,22 sparkle,43,1411,19 cloud,162,1430,27 planet,320,1463,44 bolt,735,1412,24,-20 star,603,1467,21 cloud,843,1463,38 sparkle,1040,1468,18 mitten,1235,1467,34 planet,1460,1428,42 star,147,1511,22 banana,1030,1525,54,90 sparkle,810,1528,19 bolt,385,1548,22 paper,1345,1562,62 cloud,690,1558,37",
  },
  {
    origin: [366, 0],
    scale: [0.2724, 0.1751],
    dots: "90,27,3 154,40,3 229,141,5 314,108,2 533,55,5 481,140,2 562,142,3 539,195,3 759,70,3 898,117,2 1048,36,2 943,38,6 997,108,5 1070,120,4 753,147,2 803,195,4 947,180,4 985,250,3 1333,203,4 1272,281,3 1335,293,3 1340,12,6 236,219,3 186,236,2 409,230,3 76,320,3 138,311,2 201,328,5 397,346,3 323,403,3 133,401,4 450,394,5 394,434,2 598,448,3 757,292,4 797,318,3 873,407,4 933,406,3 973,352,5 1037,368,2 1078,387,3 1183,390,4 1363,386,3 928,490,5 976,513,3 1137,481,2 1209,493,3 1274,513,3 1347,509,8 107,703,2 556,601,3 697,631,4 569,697,5 903,633,4 856,693,3 1106,688,5 1162,716,3 1289,611,6 1336,665,3 1276,700,3 1058,764,3 1114,769,3 285,809,3 608,885,2 484,960,4 732,1007,3 668,1060,3 481,1087,2 523,1100,4 147,1037,2 400,1125,8 746,1150,3 1075,1038,4 1296,1005,2 315,1433,6 495,1385,3 963,1345,2 1084,1418,4 1132,1488,2 247,1542,2 298,1528,2 719,1088,2",
    doodles:
      "planet,95,165,48,15 eye,402,70,28 star,665,80,26 bolt,848,45,20 sparkle,1158,60,26 cloud,1255,155,27,-20 cloud,660,255,38 mitten,310,260,34,-80 sparkle,482,265,18 star,870,262,22 planet,1122,252,46,45 star,1280,388,22 banana,480,430,52 sparkle,80,470,24 sparkle,685,430,20 cloud,790,525,37,-10 calc,245,560,62 bolt,1070,505,22 face,428,747,45 airplane,655,740,74 sparkle,1003,665,27 plane,1195,620,34 chat,1272,862,78 calendar,890,980,78 clock,148,865,38 tube,265,1000,44 drop,400,985,13 cloud,580,990,36,-10 sparkle,1080,895,22 monkey,1215,1170,58 drop,325,1110,13 drop,595,1090,9 sticker,100,1300,62 face,840,1395,41 heart,487,1495,20 phone,400,1480,30 cookie,1000,1530,46 sparkle,285,1300,20 profile,430,1260,34 arrow,660,1530,30",
  },
  {
    origin: [445, 214],
    scale: [0.2433, 0.7007],
    dots: "232,41,3 460,37,3 495,62,2 737,38,3 773,17,3 943,67,2 1083,87,4 295,96,3 290,110,3 358,121,5 342,152,4 319,175,3 571,129,2 610,118,3 649,128,2 667,146,3 899,107,2 1021,129,4 1131,177,3 1180,209,5 1212,231,4 898,219,5 964,230,3 967,241,3 792,243,3 737,234,3 630,230,3 590,252,4 572,274,3 343,259,3 404,234,4 419,260,4 232,267,2 158,283,4 190,311,4 82,295,4 175,351,2 249,374,3 224,408,2 293,414,4 276,442,4 358,448,5 309,459,2 425,426,5 425,452,3 404,299,3 492,314,3 546,298,3 622,352,3 766,266,3 990,296,3 1157,317,5 1123,293,3 1066,265,2 1157,373,4 1083,366,3 848,410,4 788,412,3 732,412,2 589,415,2 620,463,2 868,475,2 658,495,3 1027,490,4 1130,471,5 1186,485,3 493,534,4 811,551,2 708,574,3 784,593,5 842,575,3 1165,577,3 1131,570,5 1124,515,3 320,547,4 295,551,2 144,694,4 113,725,7 181,731,4 503,678,3 534,697,5 579,716,2 504,716,3 515,734,3 515,756,3 566,768,2 752,687,2 967,619,3 964,635,3 1069,706,3 1098,738,5 1216,730,3 980,770,2 662,787,4 726,788,6 799,784,4 949,785,2 946,803,3 809,810,2 744,806,3 714,811,2 381,803,3 459,802,3 111,797,3 418,848,4 131,905,3 151,926,4 909,876,2 951,869,3 964,893,5 992,909,3 1124,833,2 1172,837,3 1148,815,3 1191,934,5 1083,957,3 360,961,2 409,962,4 214,987,2 238,1006,3 282,1025,6 279,1060,3 246,1083,5 409,1095,4 947,1007,3 960,1021,4 1012,1017,2 1064,1017,3 1095,1008,3 1160,1016,5 1098,1041,4 838,1033,5 774,1040,3 912,1107,4 963,1095,2 883,1123,2 1016,1129,4 1019,1144,4 1124,1154,3 1145,1168,4 1200,1151,2 714,1165,3 476,1140,3 414,1142,3 477,1160,4 200,1194,4 72,1167,3 487,1213,3 540,1225,3 582,1220,3 462,1230,4 447,1245,3 488,1304,3 540,1315,3 638,1320,3 726,1275,6 799,1264,3 799,1293,3 678,1289,3 1034,1238,4 1021,1271,3 1024,1295,5 1082,1290,3 1130,1282,3 1162,1286,4 1156,1311,3 1196,1315,3 970,1371,4 976,1391,4 227,1395,6 170,1306,4 772,1393,5 793,1410,3 418,1419,4 494,1448,5 570,1457,3 685,1450,5 837,1440,7 1063,1423,5 1140,1414,3 1109,1448,6 456,1479,5 309,1470,2 87,1429,3 150,1448,3 94,1449,3 587,1524,5 538,1519,3 635,1499,2 697,1501,3 722,1512,3 755,1486,3 1175,1489,5 1168,1512,5 1196,1494,3 1098,1525,4 879,1529,2 958,1525,3 1020,1515,3 163,1560,4 220,1548,3 608,1556,4 685,1545,3",
    doodles:
      "heart,222,70,20 face,612,43,42 donut,785,85,52 star,997,96,20 paper,850,168,70 cup,1160,150,50,-20 drop,1022,182,9 drop,1070,198,9 drop,1087,235,10 drop,1022,215,10 wheel,235,218,48 user,530,188,46 user,425,180,26 user,625,190,26 star,497,243,19 sparkle,105,257,19 star,905,267,30 bolt,1070,293,22 hat,360,310,60 cup,495,382,42 guitar,840,330,100 bell,700,375,28 sparkle,332,387,24 bolt,645,313,22,-30 sparkle,670,427,20 camera,100,390,46 star,167,446,22 ticks,765,460,48 card,982,455,44 bolt,1143,436,18,40 ball,543,500,34 whale,200,595,58 pin,530,443,16,-50 pin,640,598,20,-60 brushteeth,725,535,66 profile,988,543,57 hand,1090,615,32 lighthouse,1175,650,30 player,730,645,98 burger,905,718,68 sparkle,1015,667,22 camera,365,725,45 bell,660,740,36 sparkle,418,768,20 star,893,787,22 cursor,1105,778,34 cherry,270,820,34 popsicle,565,835,48 blob,800,860,52 cake,1125,868,50 star,985,835,20 laugh,325,908,74 cat,740,965,84 drop,520,893,9 drop,660,893,9 drop,730,897,8 star,1068,929,20 card,1063,975,44 ok,450,1010,62 sparkle,297,975,22 clover,150,1050,40 gamepad,670,1090,98 sparkle,923,1055,18 mic,1072,1085,34 bolt,1228,1083,18 panel,240,1130,76 cup,570,1175,42,10 turtle,345,1200,52 grill,865,1190,58 star,1022,1211,20 heart,1165,1180,22 camera,340,1275,46 sparkle,153,1273,17 cursor,156,1338,28 flipflop,590,1260,56 duck,1120,1250,33 star,568,1344,20 dogface,370,1350,62 drink,800,1340,62 star,1032,1326,19 gear,1143,1322,24 car,1118,1378,47 envelope,610,1405,62 cloud,915,1403,38 compass,270,1432,34 gear,973,1444,26 planet,868,1485,48 heart,232,1481,18 cloud,370,1502,37 star,540,1500,20 cloud,1113,1490,40 sparkle,88,1471,16 star,165,1522,20 star,780,1548,22 camera,350,1555,44",
  },
  {
    origin: [0, 1312],
    scale: [1, 1],
    dots: "20,10,4 52,16,3 108,12,4 146,22,3 190,26,4 262,20,4 272,34,3 372,14,4 402,26,3 470,12,4 506,30,3 610,10,4 642,26,3 700,18,4 724,34,3 90,34,3 170,8,2 590,32,3 350,34,3",
    doodles: "face,226,21,44 compass,558,20,38 user,68,18,34 cloud,132,34,30 pin,178,16,14 tube,432,18,42 paper,676,10,60 star,490,22,20 sparkle,300,30,18 heart,626,24,16",
  },
];

const TILE_TEXTS = [
  { x: 104, y: 136, size: 34, rotate: -8, text: "42" },
  { x: 584, y: 188, size: 38, rotate: -8, text: "24" },
  { x: 522, y: 274, size: 32, rotate: 22, text: "BFF" },
  { x: 472, y: 1018, size: 22, rotate: -12, text: "09:28" },
];

function Tile() {
  return (
    <g id="doodle-tile">
      {SECTIONS.map((s, i) => (
        <g key={i}>
          {s.dots.split(" ").map((d, k) => {
            const [x, y, r] = d.split(",").map(Number);
            return <circle key={k} cx={s.origin[0] + x * s.scale[0]} cy={s.origin[1] + y * s.scale[1]} r={r} />;
          })}
          {s.doodles.split(" ").map((d, k) => {
            const [name, x, y, w, rot = "0"] = d.split(",");
            const tx = s.origin[0] + Number(x) * s.scale[0];
            const ty = s.origin[1] + Number(y) * s.scale[1];
            return (
              <path
                key={`m${k}`}
                d={MOTIFS[name]}
                strokeWidth={1.5 / (Number(w) / 100)}
                transform={`translate(${tx} ${ty}) rotate(${rot}) scale(${Number(w) / 100})`}
              />
            );
          })}
        </g>
      ))}
      {TILE_TEXTS.map((t) => (
        <text
          key={t.text}
          transform={`translate(${t.x} ${t.y}) rotate(${t.rotate})`}
          fontSize={t.size}
          fontWeight={700}
          fontFamily="Inter, sans-serif"
        >
          {t.text}
        </text>
      ))}
    </g>
  );
}

function Wallpaper() {
  return (
    <svg
      aria-hidden="true"
      viewBox="0 0 1568 1554"
      preserveAspectRatio="xMidYMin slice"
      className="absolute inset-0 h-full w-full"
      fill="none"
      stroke="#ff641c"
      strokeWidth={1.5}
      strokeLinejoin="round"
      strokeLinecap="round"
    >
      <defs>
        <Tile />
      </defs>
      {[-742, 0, 742, 1484].map((x) =>
        [-1352, 0, 1352].map((y) => <use key={`${x}/${y}`} href="#doodle-tile" x={x} y={y} />),
      )}
    </svg>
  );
}

/* ------------------------------------------------------------------ */
/* Step icons                                                          */
/* ------------------------------------------------------------------ */

function Glyph({ children }: { children: ReactNode }) {
  return (
    <svg viewBox="0 0 24 24" className="size-[63px]" fill="none" stroke="currentColor" strokeWidth={2} aria-hidden="true">
      {children}
    </svg>
  );
}

const LeadIcon = () => (
  <Glyph>
    <path d="M10.2 20H5a1 1 0 0 1-1-1V5a1 1 0 0 1 1-1h14a1 1 0 0 1 1 1v6" />
    <path d="M7 8h10M7 12h6" />
    <path d="M7 15h6l-1.2 2H7z" fill="currentColor" stroke="none" />
    <circle cx="17" cy="13.5" r="2.6" fill="currentColor" stroke="none" />
    <path d="M12 21v-1.400c0-1.600 2.800-2.600 5-2.600s5 1 5 2.600V21z" fill="currentColor" stroke="none" />
  </Glyph>
);

const HelmetIcon = () => (
  <Glyph>
    <path d="M3 17.800C3 11 7.500 5 14 5c4.200 0 7 3 7 7s-3 7-7 7H4.200A1.200 1.200 0 0 1 3 17.800z" />
    <path d="M6.800 8h3.600a3.350 3.350 0 0 1 0 6.700H3.600" />
  </Glyph>
);

const PackageIcon = () => (
  <Glyph>
    <path d="M4 7v12a1 1 0 0 0 1 1h14a1 1 0 0 0 1-1V7l-1.600-2.600a1 1 0 0 0-.8-.4H6.400a1 1 0 0 0-.8.4zM4 7.200h16" />
    <path d="M9 8v6.400l3-1.500 3 1.500V8" />
  </Glyph>
);

const TruckIcon = () => (
  <Glyph>
    <path d="M5.200 5.100H18M3 9h6.500M1 12.500h6M2 16h3" />
    <path d="M17 5l-2 10.500M10 16h4.500M16.600 9H20c1 1 1.600 2.300 1.800 3.800" />
    <path d="M15.400 12.400h7.400L22 17h-2.500l-4.800-1z" fill="currentColor" stroke="none" />
    <circle cx="7.200" cy="17" r="2" />
    <circle cx="17" cy="17" r="2" fill="#f0f0f0" />
  </Glyph>
);

const ExceptionIcon = () => (
  <Glyph>
    <path d="M12 3v10M12 15v2M4 16v3a1 1 0 0 0 1 1h14a1 1 0 0 0 1-1v-3" />
  </Glyph>
);

const MailboxIcon = () => (
  <Glyph>
    <path d="M7 12V9a6 6 0 0 1 6-6h2a6 6 0 0 1 6 6v13M16 18h5M10 9h8" />
    <path d="M3 13h12v8H3z" />
    <path d="M3 13.800l6 3.800 6-3.800" strokeWidth={1.600} />
  </Glyph>
);

/* ------------------------------------------------------------------ */
/* Timeline                                                            */
/* ------------------------------------------------------------------ */

interface Step {
  title: string;
  status: "In-progress" | "Pending";
  icon: ReactNode;
}

const STEPS: Step[] = [
  { title: "New Lead", status: "In-progress", icon: <LeadIcon /> },
  { title: "Pickup", status: "Pending", icon: <HelmetIcon /> },
  { title: "Verification & KYC", status: "Pending", icon: <MdFingerprint className="size-[63px]" /> },
  { title: "Payment", status: "Pending", icon: <MdCreditScore className="size-[63px]" /> },
  { title: "Assignment", status: "Pending", icon: <PackageIcon /> },
  { title: "In-Transit", status: "Pending", icon: <TruckIcon /> },
  { title: "Exception", status: "Pending", icon: <ExceptionIcon /> },
  { title: "Delivered", status: "Pending", icon: <MailboxIcon /> },
];

const DATE = "02 Jul 2025, 6:24 PM";

function ProgressMark() {
  return (
    <span
      role="img"
      aria-label="In progress"
      className="flex size-[70px] shrink-0 items-center justify-center rounded-[21px] border-4 border-[#f7ec52] bg-[#fff57c] text-[#544c0c]"
    >
      <svg viewBox="0 0 62 62" className="size-[62px]" aria-hidden="true">
        {Array.from({ length: 12 }, (_, i) => {
          const a = ((i * 30 + 15) * Math.PI) / 180;
          return <circle key={i} cx={31 + Math.cos(a) * 20} cy={31 + Math.sin(a) * 20} r={2.8} fill="currentColor" />;
        })}
        <path d="M31 20v11.500l8 7.500" fill="none" stroke="currentColor" strokeWidth={5.500} strokeLinejoin="round" />
      </svg>
    </span>
  );
}

function TimelineRow({ step, last }: { step: Step; last: boolean }) {
  const active = step.status === "In-progress";
  return (
    <li className="relative flex items-center">
      {!last && (
        <span
          aria-hidden="true"
          className={`absolute top-1/2 left-[59px] h-[297px] w-[13px] ${active ? "bg-black" : "bg-[#f0f0f0]"}`}
        />
      )}
      <span
        className={`relative flex size-[131px] shrink-0 items-center justify-center rounded-[16px] ${
          active ? "bg-black text-white" : "bg-[#f0f0f0] text-[#1c1b1f]"
        }`}
      >
        {step.icon}
      </span>
      <div className="ml-[52px] flex-1 text-[53px] leading-[83px] font-medium text-[#737373]">
        <div className="flex gap-[26px]">
          <h2 className="text-[#14181c]">{step.title}</h2>
          <span>•</span>
          <time>{DATE}</time>
        </div>
        <div className="flex h-[83px] items-center gap-[22px]">
          <span>Status:</span>
          <span
            className={`flex h-[70px] items-center rounded-[20px] border-4 px-[28px] text-[43px] leading-[60px] font-semibold ${
              active ? "border-[#f7e8bb] bg-[#fdf3cf] text-[#72571b]" : "border-[#e6e6e6] bg-[#f0f0f0] text-[#737373]"
            }`}
          >
            {step.status}
          </span>
        </div>
        <p>Remark: None</p>
      </div>
      {active ? (
        <ProgressMark />
      ) : (
        <input
          type="checkbox"
          aria-label={`Mark ${step.title} as done`}
          className="size-[70px] shrink-0 appearance-none rounded-[21px] border-4 border-[#d4d4d4] bg-white checked:bg-[#d4d4d4]"
        />
      )}
    </li>
  );
}

export default function App() {
  return (
    <main className="relative flex min-h-screen flex-col items-center justify-center gap-[52px] overflow-hidden bg-[#ff5000] font-['Roboto',sans-serif]">
      <Wallpaper />
      <h1 className="relative bg-linear-to-r from-white to-white/50 bg-clip-text font-['Lato',sans-serif] text-[150px] leading-[190px] font-semibold text-transparent">
        Freight Management Product
      </h1>
      <section className="relative w-full max-w-[2183px] rounded-[56px] bg-white px-[104px] pt-[104px] pb-[130px] shadow-[0_313px_784px_-104px_rgba(0,0,0,0.12)]">
        <header className="mb-[80px] flex h-[72px] items-center justify-between">
          <p className="text-[61px] leading-[72px] font-medium text-[#757575]">Order: 6522100033</p>
          <button type="button" aria-label="Close" className="flex size-[70px] items-center justify-center text-[#a3a3a3]">
            <svg viewBox="0 0 48 48" className="size-[48px]" aria-hidden="true">
              <path d="M3 3l42 42M45 3L3 45" stroke="currentColor" strokeWidth={5} strokeLinecap="round" />
            </svg>
          </button>
        </header>
        <ol className="flex flex-col gap-[48px]">
          {STEPS.map((step, i) => (
            <TimelineRow key={step.title} step={step} last={i === STEPS.length - 1} />
          ))}
        </ol>
      </section>
      <p className="relative bg-linear-to-r from-[#ffe3d8] to-[#ffc0a5] bg-clip-text font-['Lato',sans-serif] text-[75px] leading-[96px] text-transparent">
        SaaS Design - Timeline
      </p>
    </main>
  );
}
